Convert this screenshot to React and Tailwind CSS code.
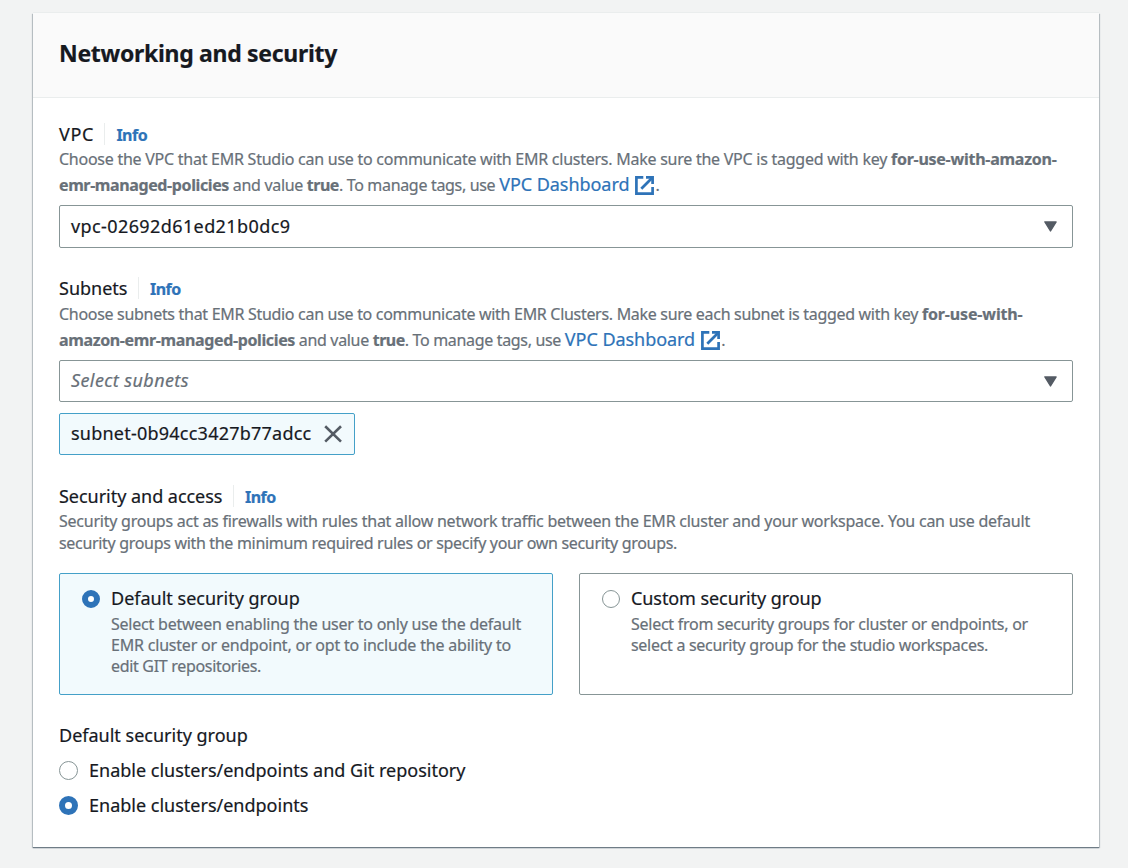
import { clsx } from "clsx";

function ExternalIcon() {
  return (
    <svg className="ml-[6px] mr-px inline-block align-[-4px]" width="19" height="19" viewBox="0 0 19 19" fill="none" stroke="#2e73b8" strokeWidth="2.7">
      <path d="M8.3 1.4H1.4V17.6H17.6V11" />
      <path d="M11 1.4H17.6V8" />
      <path d="M6.3 12.7L17 2" />
    </svg>
  );
}

function DashboardLink() {
  return (
    <a className="text-[18px] tracking-[-0.05px] text-[#2e73b8]">
      VPC Dashboard
      <ExternalIcon />
    </a>
  );
}

function Label({ children }) {
  return (
    <div className="flex h-[22px] items-center">
      <span className="text-[18px] leading-[22px]">{children}</span>
      <span className="ml-[10.5px] h-[22px] w-px bg-[#eaeded]" />
      <a className="ml-[11px] pt-[2px] text-[16px] font-bold leading-[22px] tracking-[-0.5px] text-[#2e73b8]">Info</a>
    </div>
  );
}

function Select({ children, className }) {
  return (
    <div className={clsx("flex items-center justify-between rounded-[2px] border border-[#879596] pl-[11px] pr-[15px] text-[18px]", className)}>
      {children}
      <svg width="13" height="11" viewBox="0 0 13 11" fill="#545b64" stroke="#545b64" strokeWidth="1.4" strokeLinejoin="round">
        <path d="M.9 .9H12.1L6.5 10Z" />
      </svg>
    </div>
  );
}

function Radio({ checked, large }) {
  return (
    <span
      className={clsx(
        "shrink-0 rounded-full bg-white",
        large ? "size-[19px]" : "size-[18px]",
        checked ? "border-[6px] border-[#2e73b8]" : "border border-[#879596]"
      )}
    />
  );
}

function Tile({ checked, title, children }) {
  return (
    <div
      className={clsx(
        "flex h-[122px] w-[494px] rounded-[2px] border pl-[22px] pt-[13px]",
        checked ? "border-[#44a0c8] bg-[#f2fafd]" : "border-[#879596] bg-white"
      )}
    >
      <div className="flex pt-[3px]">
        <Radio checked={checked} />
      </div>
      <div className="ml-[11px] whitespace-nowrap">
        {title}
        <div className="mt-[5px] text-[16px] leading-[21px] text-[#687078]">{children}</div>
      </div>
    </div>
  );
}

export default function App() {
  return (
    <div className="h-[868px] w-[1128px] overflow-hidden bg-[#f2f3f3] pl-[33px] pt-[13px] font-['Noto_Sans','Open_Sans',sans-serif] text-[#16191f] [-webkit-text-stroke:0.2px]">
      <section className="h-[834px] w-[1066px] bg-white shadow-[0_1px_1px_0_#6f7c86,1px_1px_1px_0_#c5cbcd,-1px_1px_1px_0_#c5cbcd,0_-1px_0_0_#eaeded]">
        <header className="h-[85px] border-b border-[#eaeded] bg-[#fafafa] pl-[26px] pt-[24px]">
          <h2 className="text-[23px] font-bold leading-[32px] tracking-[-0.3px]">Networking and security</h2>
        </header>

        <div className="whitespace-nowrap px-[26px] pt-[25px]">
          <Label><span className="tracking-[0.6px]">VPC</span></Label>
          <div className="mt-px h-[52px] text-[16px] leading-[26px] text-[#687078]">
            <div className="h-[26px] tracking-[-0.254px]">
              Choose the VPC that EMR Studio can use to communicate with EMR clusters. Make sure the VPC is tagged with key{" "}
              <b>for-use-with-amazon-</b>
            </div>
            <div className="h-[26px] leading-[24px] tracking-[-0.32px]">
              <b className="tracking-[-0.389px]">emr-managed-policies</b> and value <b className="tracking-[-0.5px]">true</b>. To manage tags, use <DashboardLink />.
            </div>
          </div>
          <Select className="mt-[7px] h-[43px]">
            <span className="tracking-[0.4px]">vpc-02692d61ed21b0dc9</span>
          </Select>

          <div className="mt-[29px]">
            <Label>Subnets</Label>
          </div>
          <div className="mt-[2px] h-[52px] text-[16px] leading-[26px] text-[#687078]">
            <div className="h-[26px] tracking-[-0.302px]">
              Choose subnets that EMR Studio can use to communicate with EMR Clusters. Make sure each subnet is tagged with key{" "}
              <b className="tracking-[-0.15px]">for-use-with-</b>
            </div>
            <div className="h-[26px] leading-[24px] tracking-[-0.33px]">
              <b className="tracking-[-0.369px]">amazon-emr-managed-policies</b> and value <b className="tracking-[-0.5px]">true</b>. To manage tags, use <DashboardLink />.
            </div>
          </div>
          <Select className="mt-[7px] h-[42px]">
            <span className="pb-[2px] italic tracking-[0.4px] text-[#687078]">Select subnets</span>
          </Select>
          <div className="mt-[11px] flex h-[42px] w-[296px] items-center rounded-[2px] border border-[#44a0c8] bg-[#f2fafd] pl-[11px] text-[18px]">
            <span className="w-[241px] pb-[2px] tracking-[0.23px]">subnet-0b94cc3427b77adcc</span>
            <svg className="ml-[12px]" width="18" height="18" viewBox="0 0 18 18" fill="none" stroke="#545b64" strokeWidth="2.6">
              <path d="M1.2 1.2L17 16.6M17 1.2L1.2 16.6" />
            </svg>
          </div>

          <div className="mt-[30px]">
            <Label><span className="tracking-[-0.03px]">Security and access</span></Label>
          </div>
          <div className="mt-[3px] text-[16px] leading-[22px] text-[#687078]">
            <div className="tracking-[-0.239px]">
              Security groups act as firewalls with rules that allow network traffic between the EMR cluster and your workspace. You can use default
            </div>
            <div className="tracking-[-0.316px]">
              security groups with the minimum required rules or specify your own security groups.
            </div>
          </div>

          <div className="mt-[19px] flex gap-[26px]">
            <Tile checked title={<div className="text-[18px] leading-[22px]">Default security group</div>}>
              <div className="tracking-[-0.22px]">Select between enabling the user to only use the default</div>
              <div className="tracking-[-0.198px]">EMR cluster or endpoint, or opt to include the ability to</div>
              <div className="tracking-[-0.312px]">edit GIT repositories.</div>
            </Tile>
            <Tile title={<div className="text-[18px] leading-[22px] tracking-[-0.08px]">Custom security group</div>}>
              <div className="tracking-[-0.258px]">Select from security groups for cluster or endpoints, or</div>
              <div className="tracking-[-0.297px]">select a security group for the studio workspaces.</div>
            </Tile>
          </div>

          <div className="mt-[29px] text-[18px] leading-[22px]">
            <div>Default security group</div>
            <div className="mt-[13px] flex h-[22px] items-center gap-[11px]">
              <Radio large />
              Enable clusters/endpoints and Git repository
            </div>
            <div className="mt-[13px] flex h-[22px] items-center gap-[11px]">
              <Radio large checked />
              Enable clusters/endpoints
            </div>
          </div>
        </div>
      </section>
    </div>
  );
}
